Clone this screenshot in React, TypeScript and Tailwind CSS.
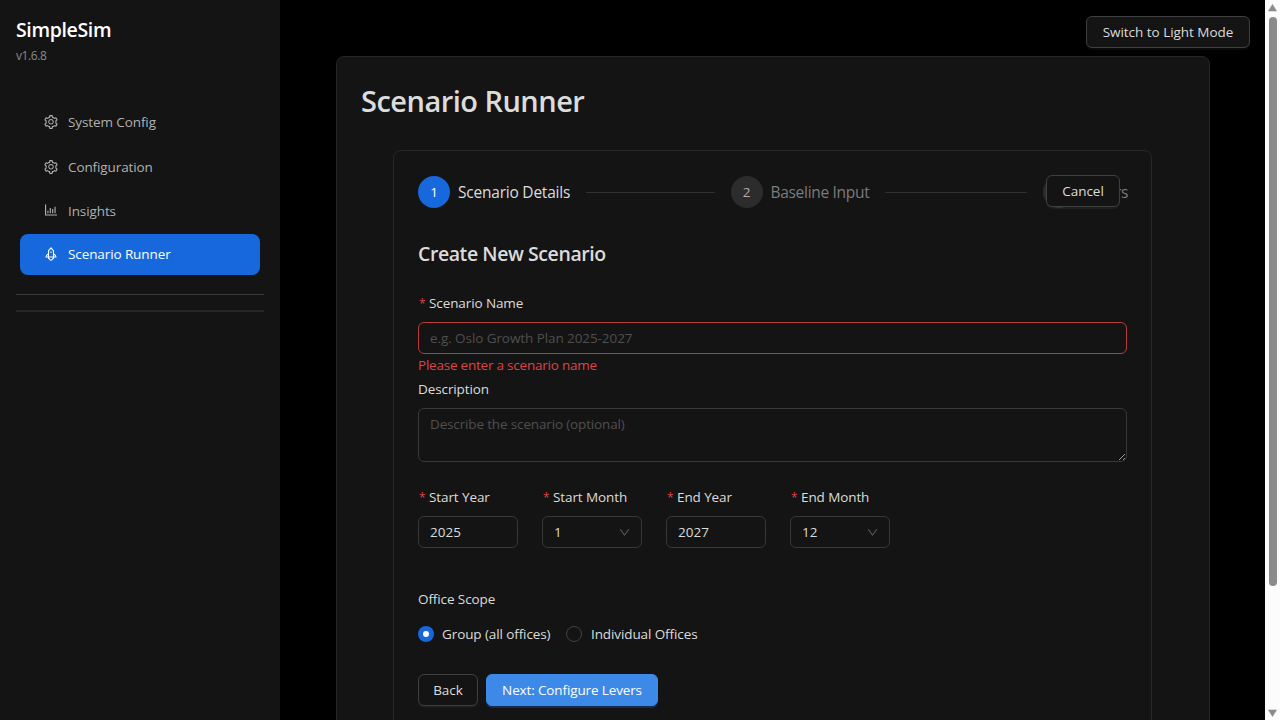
import type { ReactNode } from "react";
import {
  AiOutlineBarChart,
  AiOutlineDown,
  AiOutlineRocket,
  AiOutlineSetting,
} from "react-icons/ai";

function NavItem({ icon, label, className = "" }: { icon: ReactNode; label: string; className?: string }) {
  return (
    <a className={`flex items-center gap-[9px] rounded-lg pl-[23px] ${className}`}>
      {icon}
      <span className="text-[13.5px] tracking-[-0.1px]">{label}</span>
    </a>
  );
}

function Step({ index, title, active = false, last = false }: { index: number; title: string; active?: boolean; last?: boolean }) {
  return (
    <div className={`flex items-center ${last ? "shrink-0" : "min-w-0 flex-1"}`}>
      <span
        className={`flex size-8 items-center justify-center rounded-full text-[13.5px] ${
          active ? "bg-[#1668dc] text-white" : "bg-[#2c2c2c] text-[#b0b0b0]"
        }`}
      >
        {index}
      </span>
      <span
        className={`ml-2 pt-0.5 text-[15.5px] whitespace-nowrap ${
          active ? "tracking-[-0.22px] text-[#dcdcdc]" : "tracking-[-0.3px] text-[#7b7b7b]"
        } ${last ? "w-11" : ""}`}
      >
        {title}
      </span>
      {!last && <div className="mx-4 h-px flex-1 bg-[#303030]" />}
    </div>
  );
}

function Label({ children, required = false }: { children: ReactNode; required?: boolean }) {
  return (
    <label className="flex h-[22px] items-center text-[13.5px] tracking-[-0.1px] text-[#dcdcdc]">
      {required && <span className="mr-1 w-[7px] pt-[2px] pl-px text-[12px] text-[#dc4446]">*</span>}
      <span>{children}</span>
    </label>
  );
}

function SmallField({ label, value, select = false }: { label: string; value: string; select?: boolean }) {
  return (
    <div className="w-[100px]">
      <Label required>{label}</Label>
      <div className="mt-2 flex h-8 items-center justify-between rounded-md border border-[#383838] px-[11px] text-[13.5px] text-[#dcdcdc]">
        <span>{value}</span>
        {select && <AiOutlineDown className="-mr-px size-[13px] text-[#585858]" />}
      </div>
    </div>
  );
}

function Button({ children, className = "", primary = false }: { children: ReactNode; className?: string; primary?: boolean }) {
  return (
    <button
      className={`flex h-8 items-center justify-center rounded-md border text-[13.5px] tracking-[-0.03px] whitespace-nowrap ${
        primary
          ? "border-[#3c89e8] bg-[#3c89e8] text-white shadow-[0_2px_0_rgba(22,60,120,0.6)]"
          : "border-[#404040] bg-[#141414] text-[#dcdcdc] shadow-[0_2px_0_rgba(255,255,255,0.04)]"
      } ${className}`}
    >
      {children}
    </button>
  );
}

function Scrollbar() {
  return (
    <div className="flex h-full w-[15px] shrink-0 flex-col items-center justify-between bg-[#fcfcfc]">
      <svg className="mt-[4px] h-2 w-[9px]" viewBox="0 0 9 8">
        <path d="M4.5 0.5 8.5 7H0.5Z" fill="#8b8b8b" stroke="#8b8b8b" strokeWidth="0.6" strokeLinejoin="round" />
      </svg>
      <div className="mt-[5px] ml-px h-[569px] w-2 rounded-full bg-[#8b8b8b]" />
      <svg className="mt-auto mb-[3px] h-2 w-[9px]" viewBox="0 0 9 8">
        <path d="M4.5 7.5 8.5 1H0.5Z" fill="#8b8b8b" stroke="#8b8b8b" strokeWidth="0.6" strokeLinejoin="round" />
      </svg>
    </div>
  );
}

export default function App() {
  return (
    <div className="flex h-[720px] w-[1280px] overflow-hidden bg-black font-['Open_Sans','Noto_Sans',sans-serif]">
      <aside className="w-[280px] shrink-0 bg-[#141414] px-4">
        <h1 className="mt-4 text-[19.5px] leading-7 font-semibold tracking-[-0.35px] text-white">SimpleSim</h1>
        <p className="mt-[3px] text-[12px] leading-[18px] tracking-[-0.4px] text-[#8a8a8a]">v1.6.8</p>
        <nav className="mx-1 mt-[37px] flex flex-col">
          <NavItem className="h-10 text-[#b0b0b0]" icon={<AiOutlineSetting className="size-4" />} label="System Config" />
          <NavItem className="mt-[5px] h-10 text-[#b0b0b0]" icon={<AiOutlineSetting className="mb-px size-4" />} label="Configuration" />
          <NavItem className="mt-1 h-10 text-[#b0b0b0]" icon={<AiOutlineBarChart className="mb-0.5 size-4" />} label="Insights" />
          <NavItem
            className="mt-[3px] h-[41px] bg-[#1668dc] text-white"
            icon={<AiOutlineRocket className="mb-px size-4" />}
            label="Scenario Runner"
          />
        </nav>
        <hr className="mt-[19px] border-t border-[#3a3a3a]" />
        <hr className="mt-[15px] border-t-2 border-[#262626]" />
      </aside>

      <main className="flex h-full min-w-0 flex-1 flex-col">
        <div className="flex justify-end pt-4 pr-[15px]">
          <Button className="w-[164px]">Switch to Light Mode</Button>
        </div>
        <section className="mt-2 mr-[55px] ml-14 h-[800px] shrink-0 rounded-lg border border-[#262626] bg-[#141414] px-6 pt-6">
          <h2 className="text-[29px] leading-[40px] font-semibold tracking-[-0.52px] text-[#dcdcdc]">Scenario Runner</h2>
          <div className="relative mt-[29px] mr-[33px] ml-8 h-[640px] rounded-lg border border-[#282828] px-6 pt-[25px]">
            <div className="flex items-center">
              <Step index={1} title="Scenario Details" active />
              <Step index={2} title="Baseline Input" />
              <Step index={3} title="Levers" last />
            </div>
            <Button className="absolute top-6 right-[31px] w-[74px]">Cancel</Button>

            <h3 className="mt-8 text-[19.5px] leading-7 font-semibold tracking-[-0.43px] text-[#dcdcdc]">Create New Scenario</h3>

            <div className="mt-[24px]">
              <Label required>Scenario Name</Label>
              <input
                className="mt-2 block h-8 w-full rounded-md border border-[#b83a3c] bg-transparent px-[11px] text-[13.5px] tracking-[-0.08px] placeholder:text-[#4f4f4f]"
                placeholder="e.g. Oslo Growth Plan 2025-2027"
              />
              <p className="h-6 text-[13.5px] leading-[23px] tracking-[-0.22px] text-[#dc4446]">Please enter a scenario name</p>
            </div>
            <div>
              <Label>Description</Label>
              <textarea
                className="mt-2 block h-[54px] w-full resize-y rounded-md border border-[#383838] bg-transparent px-[11px] py-1 text-[13.5px] leading-[22px] tracking-[-0.15px] placeholder:text-[#4f4f4f]"
                placeholder="Describe the scenario (optional)"
              />
            </div>

            <div className="mt-6 flex gap-6">
              <SmallField label="Start Year" value="2025" />
              <SmallField label="Start Month" value="1" select />
              <SmallField label="End Year" value="2027" />
              <SmallField label="End Month" value="12" select />
            </div>

            <div className="mt-10">
              <Label>Office Scope</Label>
              <div className="mt-[13px] flex h-[22px] items-center text-[13.5px] tracking-[-0.1px] text-[#dcdcdc]">
                <span className="flex size-4 items-center justify-center rounded-full bg-[#1668dc]">
                  <span className="size-1.5 rounded-full bg-white" />
                </span>
                <span className="ml-2 w-[109px] whitespace-nowrap">Group (all offices)</span>
                <span className="ml-[15px] size-4 rounded-full border border-[#424242]" />
                <span className="ml-[9px]">Individual Offices</span>
              </div>
            </div>

            <div className="mt-[29px] flex gap-2">
              <Button className="w-[60px]">Back</Button>
              <Button className="w-[172px] tracking-[-0.13px]" primary>
                Next: Configure Levers
              </Button>
            </div>
          </div>
        </section>
      </main>
      <Scrollbar />
    </div>
  );
}
